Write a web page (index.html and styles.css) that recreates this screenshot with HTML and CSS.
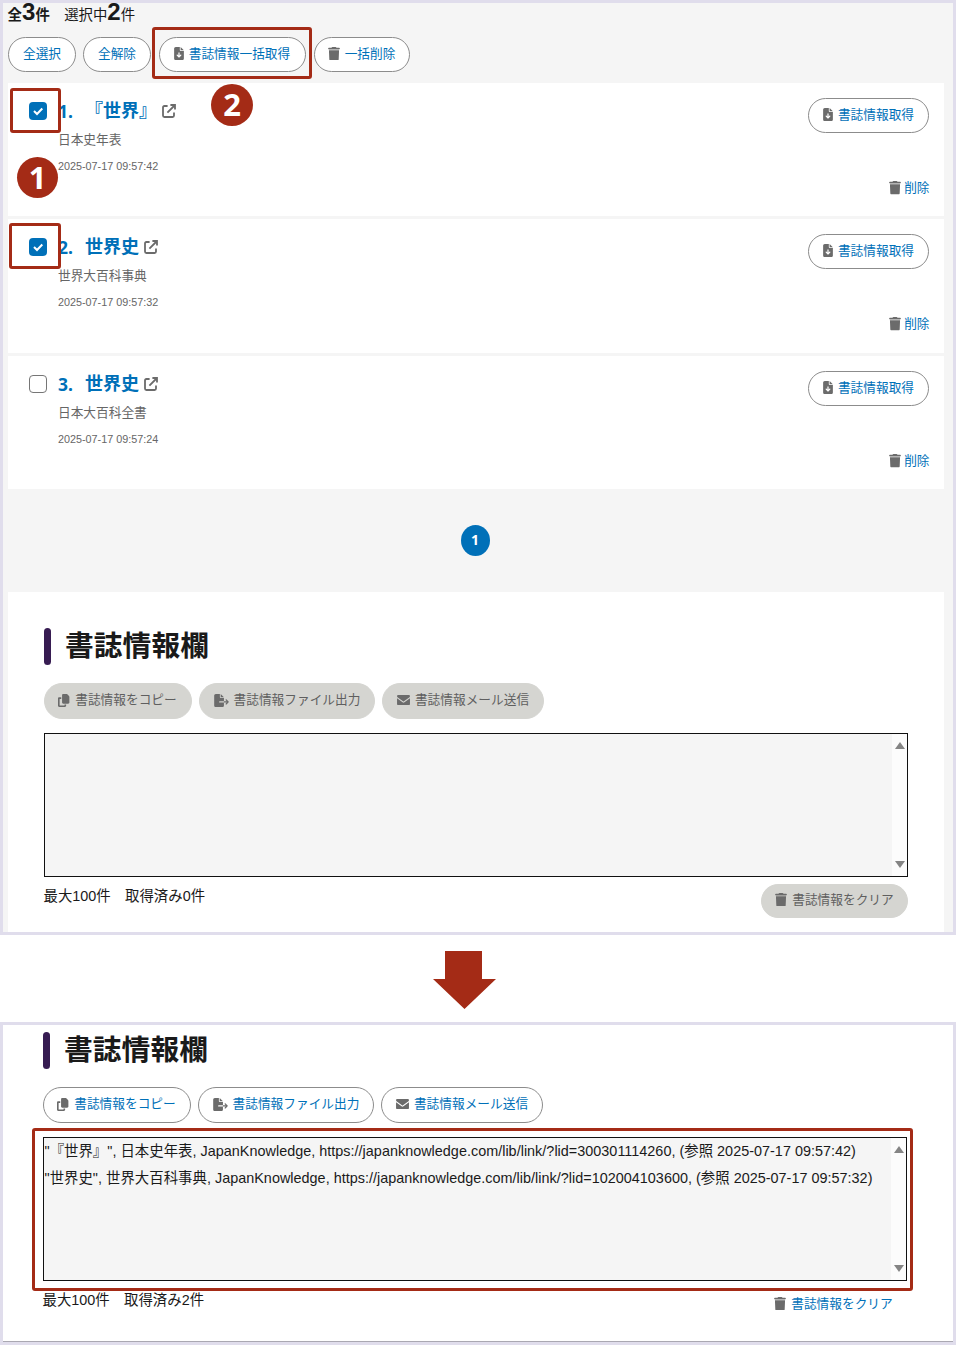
FILE: index.html
```html
<!DOCTYPE html>
<html lang="ja">
<head>
<meta charset="utf-8">
<title>書誌情報</title>
<link rel="stylesheet" href="styles.css">
</head>
<body>
<svg class="defs" width="0" height="0">
  <symbol id="trash" viewBox="0 0 448 512"><path d="M135 18L128 32H32C14 32 0 42 0 60S14 92 32 92H416c18 0 32-14 32-32s-14-28-32-28H320l-7-14C307 7 296 0 284 0H164c-12 0-23 7-29 18zM416 124H32L46 464c1 27 21 48 48 48H354c27 0 47-21 48-48z"/></symbol>
  <symbol id="file-down" viewBox="0 0 384 512"><path fill-rule="evenodd" d="M64 0C29 0 0 29 0 64V448c0 35 29 64 64 64H320c35 0 64-29 64-64V160H256c-18 0-32-14-32-32V0zM256 0V128H384zM216 232V334l31-31c9-9 25-9 34 0s9 25 0 34l-72 72c-9 9-25 9-34 0l-72-72c-9-9-9-25 0-34s25-9 34 0l31 31V232c0-13 11-24 24-24s24 11 24 24z"/></symbol>
  <symbol id="copy" viewBox="0 0 512 512"><path d="M208 0H332c13 0 25 5 34 14l68 68c9 9 14 21 14 34V336c0 27-22 48-48 48H208c-27 0-48-21-48-48V48c0-27 21-48 48-48zM48 128h80v64H64V448H256V416h64v48c0 27-21 48-48 48H48c-27 0-48-21-48-48V176c0-27 21-48 48-48z"/></symbol>
  <symbol id="file-export" viewBox="0 0 576 512"><path d="M0 64C0 29 29 0 64 0H224V128c0 18 14 32 32 32H384V288H216c-13 0-24 11-24 24s11 24 24 24H384V448c0 35-29 64-64 64H64c-35 0-64-29-64-64zM384 336V288H494l-39-39c-9-9-9-25 0-34s25-9 34 0l80 80c9 9 9 25 0 34l-80 80c-9 9-25 9-34 0s-9-25 0-34l39-39zM384 128H256V0z"/></symbol>
  <symbol id="mail" viewBox="0 0 512 416"><path d="M48 0C22 0 0 22 0 48c0 15 7 29 19 38L237 250c11 9 27 9 38 0L493 86c12-9 19-23 19-38 0-26-22-48-48-48zM0 126V352c0 35 29 64 64 64H448c35 0 64-29 64-64V126L294 290c-22 17-54 17-76 0z"/></symbol>
  <symbol id="external" viewBox="0 0 14 14"><path d="M5.6 2H2.4Q1 2 1 3.4V11.600Q1 13 2.400 13H10.600Q12 13 12 11.600V8.600M5.400 8.600L12 2M8.400 1H13V5.600" fill="none" stroke="currentColor" stroke-width="1.800"/></symbol>
</svg>

<section class="panel panel-list">
  <p class="counts"><b>全<span class="num">3</span>件</b>　選択中<b class="num">2</b>件</p>
  <div class="toolbar">
    <button class="btn w68">全選択</button>
    <button class="btn w68">全解除</button>
    <button class="btn w147 gap-before"><svg class="ico file"><use href="#file-down"/></svg>書誌情報一括取得</button>
    <button class="btn w96 gap-before"><svg class="ico bin"><use href="#trash"/></svg>一括削除</button>
  </div>
  <ul class="items">
    <li class="item">
      <span class="check on"><svg viewBox="0 0 18 18"><path d="M5 9L8 12L13.300 6.500"/></svg></span>
      <div class="info">
        <h3><span class="no">1.</span>『世界』<svg class="ext"><use href="#external"/></svg></h3>
        <p class="source">日本史年表</p><time>2025-07-17 09:57:42</time>
      </div>
      <div class="actions"><button class="btn w121"><svg class="ico file"><use href="#file-down"/></svg>書誌情報取得</button><a class="del"><svg class="ico bin"><use href="#trash"/></svg>削除</a></div>
    </li>
    <li class="item middle">
      <span class="check on"><svg viewBox="0 0 18 18"><path d="M5 9L8 12L13.300 6.500"/></svg></span>
      <div class="info">
        <h3><span class="no">2.</span>世界史<svg class="ext"><use href="#external"/></svg></h3>
        <p class="source">世界大百科事典</p><time>2025-07-17 09:57:32</time>
      </div>
      <div class="actions"><button class="btn w121"><svg class="ico file"><use href="#file-down"/></svg>書誌情報取得</button><a class="del"><svg class="ico bin"><use href="#trash"/></svg>削除</a></div>
    </li>
    <li class="item">
      <span class="check"></span>
      <div class="info">
        <h3><span class="no">3.</span>世界史<svg class="ext"><use href="#external"/></svg></h3>
        <p class="source">日本大百科全書</p><time>2025-07-17 09:57:24</time>
      </div>
      <div class="actions"><button class="btn w121"><svg class="ico file"><use href="#file-down"/></svg>書誌情報取得</button><a class="del"><svg class="ico bin"><use href="#trash"/></svg>削除</a></div>
    </li>
  </ul>
  <nav class="pager"><span>1</span></nav>
  <div class="biblio">
    <h2>書誌情報欄</h2>
    <div class="exports off">
      <button class="btn w148"><svg class="ico copy"><use href="#copy"/></svg>書誌情報をコピー</button>
      <button class="btn w176"><svg class="ico exp"><use href="#file-export"/></svg>書誌情報ファイル出力</button>
      <button class="btn w162"><svg class="ico mail"><use href="#mail"/></svg>書誌情報メール送信</button>
    </div>
    <div class="field"><div class="lines"></div><div class="scroll"><i class="up"></i><i class="down"></i></div></div>
    <div class="foot off"><p>最大100件　取得済み0件</p><button class="btn clear"><svg class="ico bin"><use href="#trash"/></svg>書誌情報をクリア</button></div>
  </div>
</section>

<svg class="arrow" viewBox="0 0 63 58"><path d="M12 0H49V28H63L31.500 58L0 28H12z"/></svg>

<section class="panel panel-result">
  <div class="biblio">
    <h2>書誌情報欄</h2>
    <div class="exports">
      <button class="btn w148"><svg class="ico copy"><use href="#copy"/></svg>書誌情報をコピー</button>
      <button class="btn w176"><svg class="ico exp"><use href="#file-export"/></svg>書誌情報ファイル出力</button>
      <button class="btn w162"><svg class="ico mail"><use href="#mail"/></svg>書誌情報メール送信</button>
    </div>
    <div class="field"><div class="lines"><p>"『世界』", 日本史年表, JapanKnowledge, https://japanknowledge.com/lib/link/?lid=300301114260, (参照 2025-07-17 09:57:42)</p><p>"世界史", 世界大百科事典, JapanKnowledge, https://japanknowledge.com/lib/link/?lid=102004103600, (参照 2025-07-17 09:57:32)</p></div><div class="scroll"><i class="up"></i><i class="down"></i></div></div>
    <div class="foot"><p>最大100件　取得済み2件</p><a class="btn clear plain"><svg class="ico bin"><use href="#trash"/></svg>書誌情報をクリア</a></div>
  </div>
</section>

<div class="mark mark-check1"></div>
<div class="mark mark-check2"></div>
<div class="mark mark-button"></div>
<div class="mark mark-result"></div>
<div class="step step1">1</div>
<div class="step step2">2</div>
</body>
</html>
```
FILE: styles.css
```css
* { box-sizing: border-box; margin: 0; padding: 0; }
body { position: relative; width: 956px; height: 1345px; overflow: hidden; background: #fff; color: #1a1a1a; font: 14.4px "Liberation Sans", "Noto Sans CJK JP", sans-serif; }
svg { display: block; flex: none; fill: currentColor; }
.defs { position: absolute; }

.panel { border: 3px solid #e0ddec; }
.panel-list { height: 935px; background: #f5f5f5; padding: 0 9px 0 5px; }
.counts { height: 34px; margin-left: -.4px; line-height: 20px; white-space: pre; }
.counts .num { font-size: 24px; line-height: 18px; }

.toolbar { display: flex; gap: 7px; height: 46px; }
.gap-before { margin-left: 1px; }
.btn { display: flex; align-items: center; justify-content: center; gap: 5px; height: 35px; padding: 0 1px 2px 0; border: 1px solid #8c8c8c; border-radius: 18px; background: #fff; color: #0070b8; font: 12.7px/18px "Liberation Sans", "Noto Sans CJK JP", sans-serif; white-space: nowrap; }
.w68 { width: 68px; padding-right: 0; }
.w96 { width: 96px; }
.w121 { width: 121px; padding-right: 0; }
.w147 { width: 147px; }
.w148 { width: 148px; }
.w162 { width: 162px; padding-right: 0; }
.w176 { width: 176px; padding-right: 0; }
.ico { color: #6b6b6b; height: 13px; }
.file { width: 10px; }
.bin { width: 12px; height: 13.500px; }
.copy { width: 13px; margin-right: -1px; }
.exp { width: 15px; }
.mail { width: 13px; height: 10.500px; }

.items { display: grid; gap: 3px; list-style: none; }
.item { display: flex; height: 133px; padding: 15px 15px 0 21px; background: #fff; }
.item.middle { height: 134px; }
.check { width: 18px; height: 18px; margin-top: 4px; border: 1px solid #767676; border-radius: 4px; background: #fff; }
.check.on { border: 0; background: #0070b8; }
.check path { fill: none; stroke: #fff; stroke-width: 2; }
.info { flex: 1; margin-left: 11px; color: #666; }
.info h3 { display: flex; align-items: center; height: 25px; padding-top: 1px; color: #0070b8; font-size: 18px; line-height: 25px; }
.no { width: 27px; font-family: "Noto Sans", sans-serif; font-size: 17.500px; }
.ext { width: 14px; height: 14px; margin: -1px 0 0 5px; color: #6b6b6b; }
.source { height: 30px; padding-top: 7px; font-size: 12.700px; line-height: 20px; }
time { display: block; font-size: 10.800px; line-height: 16px; padding-top: 5px; }
.actions { display: flex; flex-direction: column; align-items: flex-end; justify-content: space-between; height: 99px; }
.del { display: flex; align-items: center; gap: 3px; height: 18px; margin-right: -.5px; color: #0070b8; font-size: 12.700px; line-height: 18px; }

.pager { display: flex; justify-content: center; height: 103px; padding: 36px 2px 0 0; }
.pager span { width: 29px; height: 31px; border-radius: 50%; background: #0070b8; color: #fff; font: bold 14px/30px "Noto Sans", sans-serif; text-align: center; }

.biblio { height: 340px; padding: 36px 36px 0; background: #fff; }
h2 { display: flex; align-items: center; height: 37px; color: #1a1a1a; font-size: 28.800px; line-height: 34px; padding-bottom: 1px; }
h2::before { content: ""; width: 7px; height: 37px; margin: 1px 14px 0 0; border-radius: 4px; background: #371c52; flex: none; }
.exports { display: flex; gap: 7px; margin-top: 18px; }
.exports .btn { height: 36px; }
.off .btn { border-color: #d5d5d1; background: #d5d5d1; color: #5f5f5f; }
.field { display: flex; height: 144px; margin-top: 14px; border: 1px solid #111; background: #f5f5f5; }
.lines { flex: 1; line-height: 26.500px; letter-spacing: .02px; white-space: nowrap; padding-left: .5px; }
.scroll { display: flex; flex-direction: column; justify-content: space-between; align-items: center; width: 15px; padding: 8px 0; background: #fcfcfc; }
.scroll i { border: 5px solid transparent; width: 0; height: 0; }
.scroll .up { border-top: 0; border-bottom: 7px solid #858585; }
.scroll .down { border-bottom: 0; border-top: 7px solid #858585; }
.foot { display: flex; justify-content: space-between; padding-top: 7px; }
.foot p { line-height: 22px; margin: 1px 0 0 -.5px; white-space: pre; }
.clear { width: 147px; height: 34px; padding: 0 0 3px; }
.foot .plain { border-color: transparent; background: none; }

.arrow { width: 63px; height: 58px; margin: 16px 0 13px 433px; color: #a42b16; }
.panel-result { height: 323px; background: #fff; }
.panel-result .biblio { height: 317px; padding: 7px 46px 0 40px; border-bottom: 1px solid #aaa8b2; }

.mark { position: absolute; border: 3px solid #a42b16; border-radius: 3px; }
.mark-check1 { left: 10px; top: 88px; width: 51px; height: 45px; }
.mark-check2 { left: 9px; top: 223px; width: 52px; height: 46px; }
.mark-button { left: 152px; top: 27px; width: 160px; height: 52px; }
.mark-result { left: 32px; top: 1128px; width: 881px; height: 163px; }
.step { position: absolute; border-radius: 50%; background: #a42b16; color: #fff; text-align: center; font: bold 31px/40px "Noto Sans", sans-serif; }
.step1 { left: 17px; top: 157px; width: 41px; height: 41px; }
.step2 { left: 211px; top: 84px; width: 42px; height: 42px; }
```
